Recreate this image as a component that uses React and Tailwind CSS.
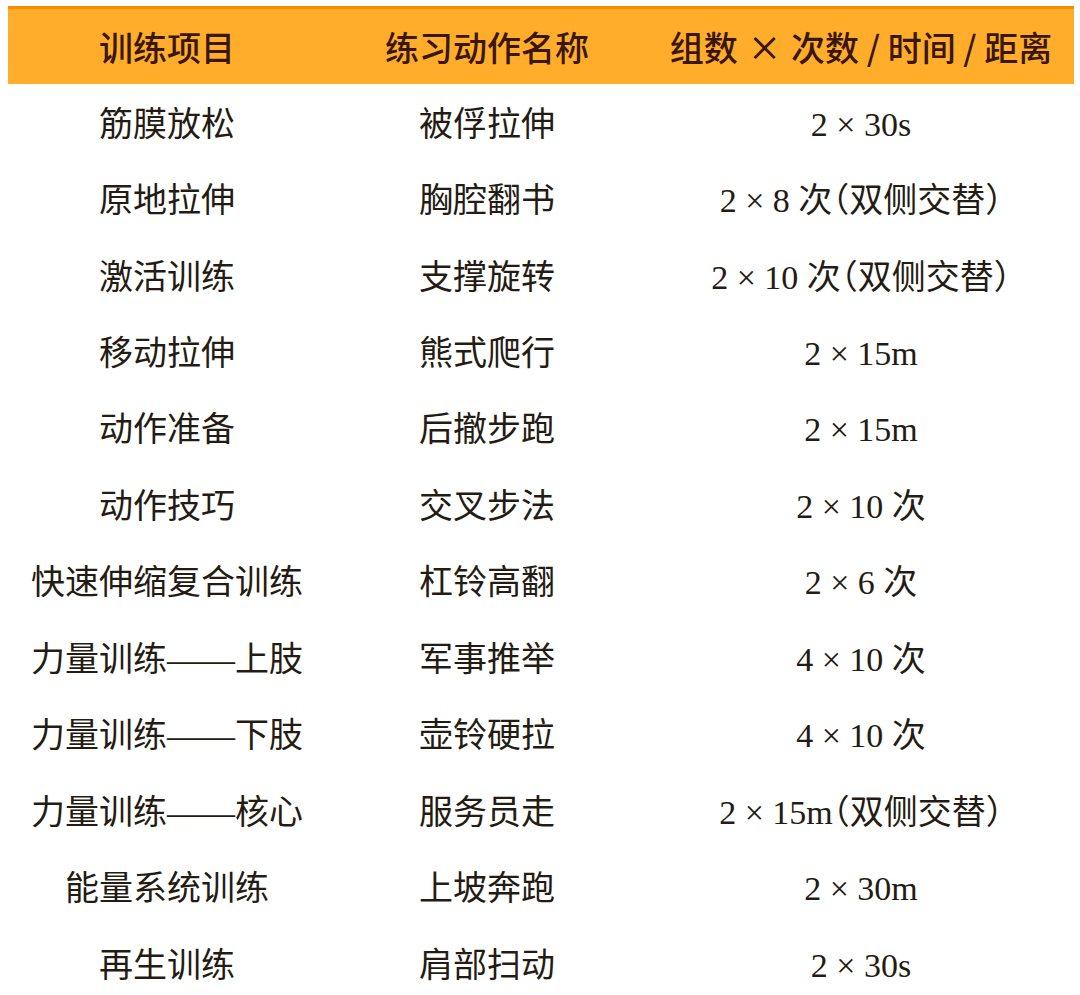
const rows = [
  ['筋膜放松', '被俘拉伸', '2 × 30s'],
  ['原地拉伸', '胸腔翻书', '2 × 8 次（双侧交替）'],
  ['激活训练', '支撑旋转', '2 × 10 次（双侧交替）'],
  ['移动拉伸', '熊式爬行', '2 × 15m'],
  ['动作准备', '后撤步跑', '2 × 15m'],
  ['动作技巧', '交叉步法', '2 × 10 次'],
  ['快速伸缩复合训练', '杠铃高翻', '2 × 6 次'],
  ['力量训练——上肢', '军事推举', '4 × 10 次'],
  ['力量训练——下肢', '壶铃硬拉', '4 × 10 次'],
  ['力量训练——核心', '服务员走', '2 × 15m（双侧交替）'],
  ['能量系统训练', '上坡奔跑', '2 × 30m'],
  ['再生训练', '肩部扫动', '2 × 30s'],
]

const cols = 'grid grid-cols-[318px_322px_426px]'

export default function App() {
  return (
    <div className="w-[1080px] h-[995px] bg-white pt-[6px] pl-[8px] overflow-hidden">
      <div className="w-[1066px]">
        {/* header */}
        <div
          className={`${cols} h-[78px] bg-[#ffad2b] border-t-[3px] border-[#ff8a00] text-[#3a1606] text-[34px] font-medium`}
          style={{ fontFamily: '"Noto Sans CJK SC", sans-serif' }}
        >
          <div className="flex items-center justify-center">训练项目</div>
          <div className="flex items-center justify-center">练习动作名称</div>
          <div className="flex items-center justify-center whitespace-pre">
            组数 <span className="px-[2px]">×</span> 次数 / 时间 / 距离
          </div>
        </div>

        {/* body */}
        <div
          className="pt-[2px] text-[#241c12] text-[34px] [font-feature-settings:'halt']"
          style={{ fontFamily: '"Liberation Serif", "Noto Sans CJK SC", serif' }}
        >
          {rows.map(([item, move, sets]) => (
            <div key={item} className={`${cols} h-[76.45px]`}>
              <div className="flex items-center justify-center whitespace-nowrap">{item}</div>
              <div className="flex items-center justify-center whitespace-nowrap">{move}</div>
              <div className="flex items-center justify-center whitespace-nowrap">{sets}</div>
            </div>
          ))}
        </div>
      </div>
    </div>
  )
}
